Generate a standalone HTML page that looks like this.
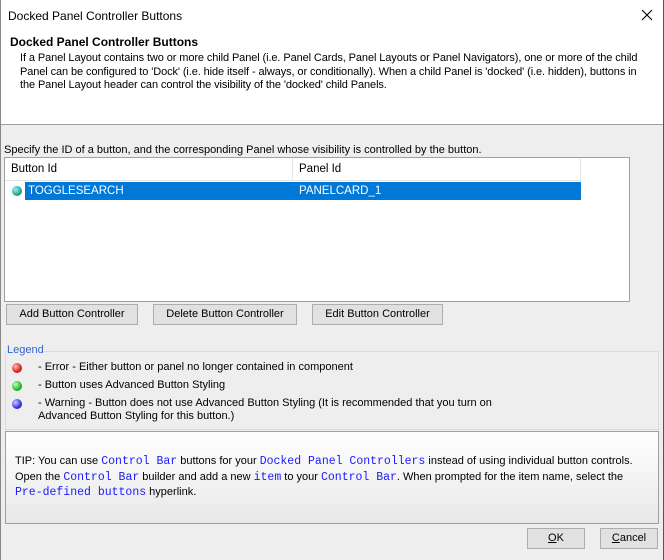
<!DOCTYPE html>
<html><head><style>
*{margin:0;padding:0;box-sizing:border-box}
body{width:664px;height:560px;overflow:hidden;background:#eeeeee;font-family:"Liberation Sans",sans-serif;font-size:11px;color:#000;position:relative}
.a{position:absolute;white-space:nowrap}
.m{font-family:"Liberation Mono",monospace;color:#1a1aff;font-size:11.5px}
.btn{position:absolute;background:#e1e1e1;border:1px solid #adadad;text-align:center;line-height:19px;font-size:11px}
.dot{position:absolute;width:10px;height:10px;border-radius:50%}
</style></head><body>
<div class="a" style="left:0;top:0;width:664px;height:125px;background:#fff;border-bottom:1px solid #a0a0a0"></div>
<div class="a" style="left:8px;top:9px;font-size:12px">Docked Panel Controller Buttons</div>
<svg class="a" style="left:641px;top:9px" width="12" height="12"><path d="M1 1L11 11M11 1L1 11" stroke="#000" stroke-width="1.1"/></svg>
<div class="a" style="left:10px;top:35px;font-weight:bold;font-size:12px">Docked Panel Controller Buttons</div>
<div class="a" style="left:20px;top:52px;line-height:13.5px;font-size:11px;letter-spacing:-0.1px">If a Panel Layout contains two or more child Panel (i.e. Panel Cards, Panel Layouts or Panel Navigators), one or more of the child<br>Panel can be configured to 'Dock' (i.e. hide itself - always, or conditionally). When a child Panel is 'docked' (i.e. hidden), buttons in<br>the Panel Layout header can control the visibility of the 'docked' child Panels.</div>
<div class="a" style="left:4px;top:144px;font-size:11px">Specify the ID of a button, and the corresponding Panel whose visibility is controlled by the button.</div>
<div class="a" style="left:4px;top:157px;width:626px;height:145px;background:#fff;border:1px solid #a0a0a0"></div>
<div class="a" style="left:5px;top:158px;width:576px;height:23px;border-bottom:1px solid #e5e5e5"></div>
<div class="a" style="left:292px;top:158px;width:1px;height:23px;background:#e5e5e5"></div>
<div class="a" style="left:580px;top:158px;width:1px;height:23px;background:#e5e5e5"></div>
<div class="a" style="left:11px;top:163px;font-size:11.5px">Button Id</div>
<div class="a" style="left:299px;top:163px;font-size:11.5px">Panel Id</div>
<div class="a" style="left:25px;top:182px;width:556px;height:18px;background:#0078d7"></div>
<div class="dot" style="left:12px;top:186px;background:radial-gradient(circle at 35% 35%,#9ef,#2a8 60%,#064)"></div>
<div class="a" style="left:28px;top:185px;color:#fff;font-size:11.5px">TOGGLESEARCH</div>
<div class="a" style="left:299px;top:185px;color:#fff;font-size:11.5px">PANELCARD_1</div>
<div class="btn" style="left:6px;top:304px;width:132px;height:21px">Add Button Controller</div>
<div class="btn" style="left:153px;top:304px;width:144px;height:21px">Delete Button Controller</div>
<div class="btn" style="left:312px;top:304px;width:131px;height:21px">Edit Button Controller</div>
<div class="a" style="left:5px;top:351px;width:654px;height:79px;border:1px solid #dcdcdc"></div>
<div class="a" style="left:7px;top:344px;color:#3366cc;background:#eeeeee;font-size:11px">Legend</div>
<div class="dot" style="left:12px;top:363px;background:radial-gradient(circle at 35% 35%,#fbb,#d22 60%,#700)"></div>
<div class="dot" style="left:12px;top:381px;background:radial-gradient(circle at 35% 35%,#bfb,#2b2 60%,#060)"></div>
<div class="dot" style="left:12px;top:399px;background:radial-gradient(circle at 35% 35%,#ccf,#33d 60%,#007)"></div>
<div class="a" style="left:38px;top:361px;font-size:11px">- Error - Either button or panel no longer contained in component</div>
<div class="a" style="left:38px;top:379px;font-size:11px">- Button uses Advanced Button Styling</div>
<div class="a" style="left:38px;top:397px;line-height:13px;font-size:11px">- Warning - Button does not use Advanced Button Styling (It is recommended that you turn on<br>Advanced Button Styling for this button.)</div>
<div class="a" style="left:5px;top:431px;width:654px;height:93px;border:1px solid #a0a0a0;background:linear-gradient(#fff,#e8e8e8)"></div>
<div class="a" style="left:15px;top:454px;line-height:14.5px;font-size:11px">TIP: You can use <span class="m">Control Bar</span> buttons for your <span class="m">Docked Panel Controllers</span> instead of using individual button controls.<br>Open the <span class="m">Control Bar</span> builder and add a new <span class="m">item</span> to your <span class="m">Control Bar</span>. When prompted for the item name, select the<br><span class="m">Pre-defined buttons</span> hyperlink.</div>
<div class="btn" style="left:527px;top:528px;width:58px;height:21px"><u>O</u>K</div>
<div class="btn" style="left:600px;top:528px;width:58px;height:21px"><u>C</u>ancel</div>
<div class="a" style="left:663px;top:0;width:1px;height:560px;background:#555"></div>
<div class="a" style="left:0;top:0;width:1px;height:560px;background:#888"></div>
</body></html>
